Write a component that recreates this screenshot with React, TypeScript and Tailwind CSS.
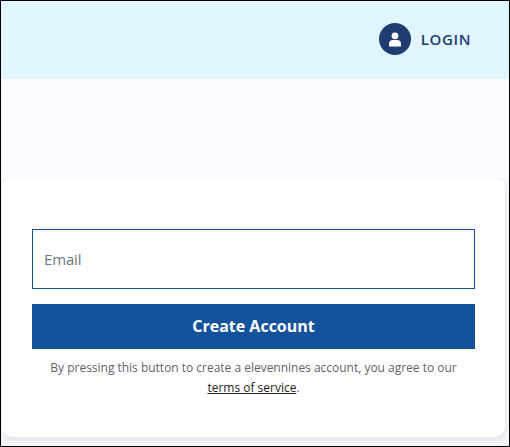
// Signup card with a login header
export default function App() {
  return (
    <div className="w-[510px] h-[447px] border border-black bg-[#f3f5f9] flex flex-col overflow-hidden font-['Open_Sans',sans-serif]">
      {/* Header */}
      <header className="h-[78px] shrink-0 bg-[#e1f5fe] flex items-center justify-end pr-[38px] pb-[2px]">
        <div className="flex items-center gap-[10px]">
          <div className="w-8 h-8 rounded-full bg-[#1f3d70] flex items-center justify-center">
            <svg width="14" height="15" viewBox="0 0 14 15" fill="#ffffff">
              <circle cx="7" cy="3.8" r="3.4" />
              <path d="M1 14.5 V11.6 C1 9.4 2.8 8 4.6 8 H9.4 C11.2 8 13 9.4 13 11.6 V14.5 Z" />
            </svg>
          </div>
          <span className="text-[15px] font-semibold tracking-[0.6px] text-[#1f3d70]">LOGIN</span>
        </div>
      </header>

      {/* Spacer */}
      <div className="h-[99px] shrink-0 bg-[#fbfcff]" />

      {/* Card */}
      <main className="h-[259px] w-[503px] ml-px shrink-0 bg-white rounded-[10px] shadow-[0_3px_5px_rgba(60,70,90,0.1)] pt-[51px] pl-[30px] pr-[30px] flex flex-col">
        <div className="h-[60px] border border-[#14529c] flex items-center pl-[11px] text-[15px] tracking-[-0.15px] text-[#6c757d]">
          Email
        </div>
        <button className="h-[45px] mt-[15px] pb-[2px] bg-[#14529c] text-white text-[16px] font-bold">
          Create Account
        </button>
        <p className="mt-[9px] px-[8px] text-[12px] tracking-[-0.015px] leading-[20px] text-center text-[#5f6368]">
          By pressing this button to create a elevennines account, you agree to our{' '}
          <span className="text-[#222222] underline">terms of service</span>.
        </p>
      </main>
    </div>
  );
}
